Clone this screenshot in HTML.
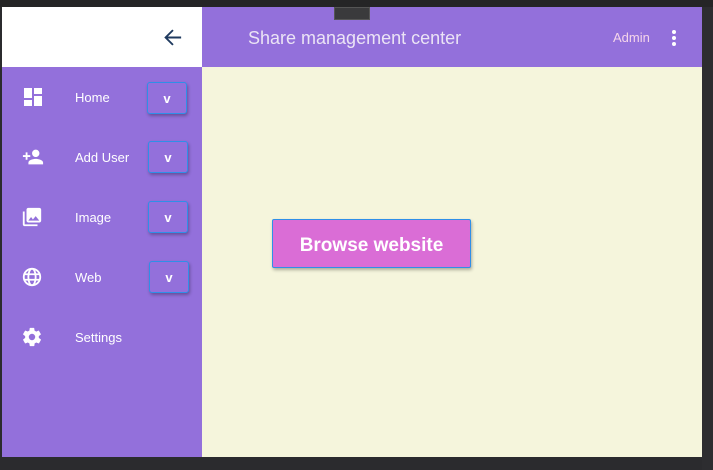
<!DOCTYPE html>
<html><head><meta charset="utf-8"><style>
*{margin:0;padding:0;box-sizing:border-box}
body{width:713px;height:470px;background:#2b2b2e;position:relative;overflow:hidden;font-family:"Liberation Sans",sans-serif}
.a{position:absolute}
.top{left:0;top:0;width:713px;height:7px;background:#252526}
.win{left:2px;top:7px;width:700px;height:450px;background:#f5f5dc}
.side{left:2px;top:67px;width:200px;height:390px;background:#9370db}
.logo{left:2px;top:7px;width:200px;height:60px;background:#fff}
.hdr{left:202px;top:7px;width:500px;height:60px;background:#9370db}
.title{left:248px;top:28px;color:#ebe4f5;font-size:18px}
.admin{left:613px;top:30px;color:#f5d5ea;font-size:13px}
.lbl{left:75px;color:#fff;font-size:13px}
.v{width:40px;height:32px;border:1.5px solid #2f8fe8;border-radius:3px;box-shadow:1px 2px 3px rgba(0,0,0,.3);color:#fff;font-weight:bold;font-size:13px;text-align:center;line-height:32px;background:#9370db}
.btn{left:272px;top:219px;width:199px;height:49px;background:#da6dd6;border:1.5px solid #2f8fe8;border-radius:2px;box-shadow:1px 2px 3px rgba(0,0,0,.3);color:#fff;font-weight:bold;font-size:19px;text-align:center;line-height:52px}
.rs{left:702px;top:7px;width:11px;height:463px;background:#2d2d30}
</style></head><body>
<div class="a top"></div>
<div class="a rs"></div>
<div class="a win"></div>
<div class="a logo"></div>
<div class="a hdr"></div>
<div class="a side"></div>
<div class="a" style="left:334px;top:7px;width:36px;height:13px;background:#3a3a3c;border:1px solid #555"></div>
<svg class="a" style="left:161px;top:26px" width="23" height="23" viewBox="0 0 24 24"><path d="M21 11H7.2l6-6L11.8 3.6 3.4 12l8.4 8.4 1.4-1.4-6-6H21z" fill="#1f3a5f"/></svg>
<div class="a title">Share management center</div>
<div class="a admin">Admin</div>
<svg class="a" style="left:671px;top:29px" width="6" height="18"><circle cx="3" cy="3" r="2" fill="#fff"/><circle cx="3" cy="9" r="2" fill="#fff"/><circle cx="3" cy="15" r="2" fill="#fff"/></svg>
<svg class="a" style="left:22px;top:87px" width="22" height="20" viewBox="0 0 20 20"><rect x="1" y="1" width="8" height="10" fill="#fff"/><rect x="11" y="1" width="8" height="6" fill="#fff"/><rect x="1" y="13" width="8" height="6" fill="#fff"/><rect x="11" y="9" width="8" height="10" fill="#fff"/></svg>
<div class="a lbl" style="top:90px">Home</div>
<div class="a v" style="left:147px;top:82px">v</div>
<svg class="a" style="left:20px;top:146px" width="26" height="22" viewBox="0 0 24 24"><path d="M15 12c2.2 0 4-1.8 4-4s-1.8-4-4-4-4 1.8-4 4 1.8 4 4 4zm-9-2V7H4v3H1v2h3v3h2v-3h3v-2H6zm9 4c-2.7 0-8 1.3-8 4v2h16v-2c0-2.7-5.3-4-8-4z" fill="#fff"/></svg>
<div class="a lbl" style="top:150px">Add User</div>
<div class="a v" style="left:148px;top:141px">v</div>
<svg class="a" style="left:21px;top:206px" width="22" height="22" viewBox="0 0 24 24"><path d="M22 16V4c0-1.1-.9-2-2-2H8c-1.1 0-2 .9-2 2v12c0 1.1.9 2 2 2h12c1.1 0 2-.9 2-2zm-11-4l2 2.7L16 11l4 5H8l3-4zM2 6v14c0 1.1.9 2 2 2h14v-2H4V6H2z" fill="#fff"/></svg>
<div class="a lbl" style="top:210px">Image</div>
<div class="a v" style="left:148px;top:201px">v</div>
<svg class="a" style="left:21px;top:266px" width="22" height="22" viewBox="0 0 24 24"><circle cx="12" cy="12" r="9" fill="none" stroke="#fff" stroke-width="2"/><ellipse cx="12" cy="12" rx="4" ry="9" fill="none" stroke="#fff" stroke-width="2"/><path d="M3 9h18M3 15h18" stroke="#fff" stroke-width="2"/></svg>
<div class="a lbl" style="top:270px">Web</div>
<div class="a v" style="left:149px;top:261px">v</div>
<svg class="a" style="left:21px;top:326px" width="22" height="22" viewBox="0 0 24 24"><path d="M19.4 13c.04-.3.06-.6.06-1s-.02-.7-.07-1l2.1-1.6c.2-.15.24-.42.12-.64l-2-3.46c-.12-.22-.39-.3-.61-.22l-2.5 1c-.52-.4-1.08-.73-1.7-.98l-.37-2.650A.5.5 0 0 0 14 2h-4a.5.5 0 0 0-.5.42l-.37 2.65c-.62.25-1.180.59-1.7.98l-2.5-1a.5.5 0 0 0-.61.22l-2 3.46c-.13.22-.07.49.12.64L4.57 11c-.05.3-.07.63-.07 1s.02.7.07 1l-2.1 1.65c-.2.15-.25.42-.12.64l2 3.46c.12.22.39.3.61.22l2.5-1c.52.4 1.08.73 1.7.98l.37 2.65c.05.24.25.42.5.42h4c.25 0 .46-.18.5-.42l.37-2.65c.62-.25 1.18-.59 1.7-.98l2.5 1c.22.08.49 0 .61-.22l2-3.46c.12-.22.07-.49-.12-.64L19.4 13zM12 15.5a3.5 3.5 0 1 1 0-7 3.5 3.5 0 0 1 0 7z" fill="#fff"/></svg>
<div class="a lbl" style="top:330px">Settings</div>
<div class="a btn">Browse website</div>
</body></html>
